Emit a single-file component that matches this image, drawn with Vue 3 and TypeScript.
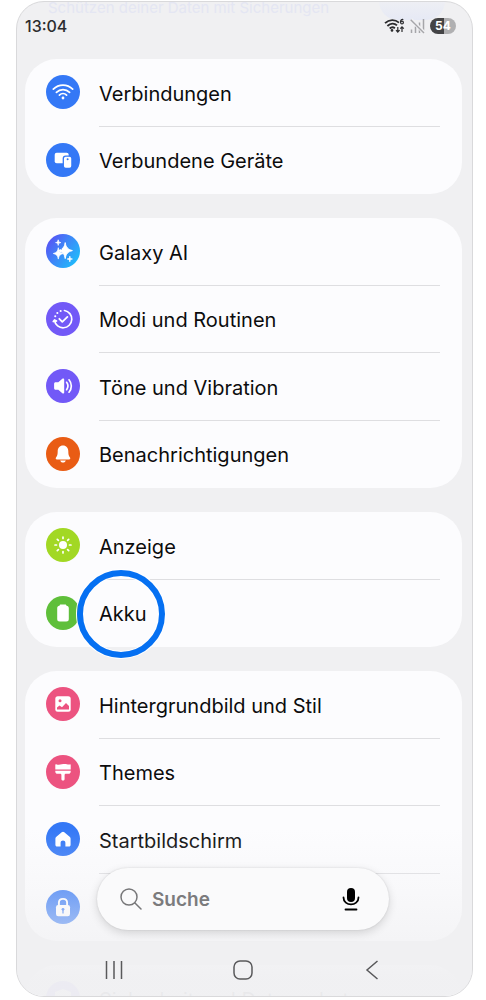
<script setup lang="ts">
import { ref } from 'vue'

interface Item {
  id: string
  label: string
  color: string
  marked?: boolean
}

const search = ref('')

const groups: Item[][] = [
  [
    { id: 'wifi', label: 'Verbindungen', color: 'blue' },
    { id: 'devices', label: 'Verbundene Geräte', color: 'blue' },
  ],
  [
    { id: 'ai', label: 'Galaxy AI', color: 'galaxy' },
    { id: 'modes', label: 'Modi und Routinen', color: 'violet' },
    { id: 'sound', label: 'Töne und Vibration', color: 'violet' },
    { id: 'bell', label: 'Benachrichtigungen', color: 'orange' },
  ],
  [
    { id: 'sun', label: 'Anzeige', color: 'lime' },
    { id: 'battery', label: 'Akku', color: 'green', marked: true },
  ],
  [
    { id: 'image', label: 'Hintergrundbild und Stil', color: 'pink' },
    { id: 'brush', label: 'Themes', color: 'pink' },
    { id: 'home', label: 'Startbildschirm', color: 'blue' },
    { id: 'lock', label: '', color: 'blue' },
  ],
  [{ id: 'shield', label: 'Sicherheit und Datenschutz', color: 'violet' }],
]
</script>

<template>
  <div class="phone">
    <header class="status">
      <span class="ghost-text">Schützen deiner Daten mit Sicherungen</span>
      <span class="ghost-dot"></span>
      <time class="clock">13:04</time>
      <div class="indicators">
        <svg width="21" height="16" viewBox="0 0 21 16" fill="none" stroke="#2c2c2e" aria-label="WLAN">
          <path d="M1 5.2C5.2 1.2 11 1.2 15 4.6M3.4 8C6.6 5 10.4 5 13 7.4M5.7 10.5c1.7-1.5 3.7-1.5 5.2-.2" stroke-width="1.8" />
          <circle cx="8" cy="12.4" r="1.3" fill="#2c2c2e" stroke="none" />
          <path d="M19.3 1.6c-1.8-.6-2.9.7-2.8 2.6" stroke-width="1.2" />
          <circle cx="18" cy="4.6" r="1.4" stroke-width="1.2" />
          <path d="M13.8 9v5M12 12.2l1.8 1.9 1.8-1.9M18 14V9M16.3 10.7 18 8.8l1.8 1.9" stroke-width="1.2" />
        </svg>
        <svg width="15" height="16" viewBox="0 0 15 16" fill="none" stroke="#a6a6a9" aria-label="Kein Signal">
          <path d="M1.5 11.5V15M5.5 8.5V15M9.5 4.5V15M13.5 1v14" stroke-width="1.5" />
          <path d="M1 1.5 14.5 15" stroke="#f1f1f3" stroke-width="3.6" />
          <path d="M.7 1.8 14 15" stroke-width="1.4" />
        </svg>
        <span class="charge">54</span>
      </div>
    </header>

    <main class="list">
      <ul v-for="(group, g) in groups" :key="g" class="card">
        <li v-for="item in group" :key="item.id" class="row">
          <a href="#" class="link">
            <svg class="icon" :class="item.color" width="34" height="34" viewBox="0 0 34 34" aria-hidden="true">
              <g v-if="item.id === 'wifi'" fill="none" stroke="#fff" stroke-width="1.7" stroke-linecap="round">
                <path d="M7.3 14.2c5.4-5.5 14-5.5 19.4 0M10.4 17.3c3.7-3.7 9.5-3.7 13.2 0M13.4 20.1c2.1-2 5.1-2 7.2 0" />
                <circle cx="17" cy="23" r="1.4" fill="#fff" stroke="none" />
              </g>
              <g v-else-if="item.id === 'devices'">
                <rect x="8.7" y="9.7" width="14" height="10.5" rx="2" fill="#fff" />
                <rect x="17.3" y="13.2" width="8.6" height="12.2" rx="2.4" fill="#fff" stroke="#3478f6" stroke-width="1.3" />
                <circle cx="21.6" cy="16.3" r="1" fill="#3478f6" />
              </g>
              <g v-else-if="item.id === 'ai'" fill="#fff">
                <path d="M19.2 8.6c.7 4.5 2.5 6.8 7.2 8-4.7 1.2-6.5 3.5-7.2 8-.7-4.5-2.5-6.8-7.2-8 4.7-1.2 6.5-3.5 7.2-8Z" stroke="#fff" />
                <path d="M12.3 13.7c.5 3.7 1.8 5 5 5.8-3.2.8-4.5 2.1-5 5.6-.5-3.5-1.8-4.8-5-5.6 3.200-.8 4.500-2.100 5-5.800Z" stroke="#fff" stroke-width=".7" />
                <path d="M12.2 5.8c.2 1.900.8 2.500 2.600 2.800-1.800.3-2.400.9-2.600 2.800-.2-1.900-.8-2.500-2.600-2.800 1.800-.3 2.400-.9 2.600-2.800ZM23.800 22.200c.2 1.900.8 2.500 2.600 2.800-1.800.3-2.400.9-2.600 2.800-.2-1.900-.8-2.500-2.600-2.800 1.800-.3 2.400-.9 2.600-2.800Z" stroke="#fff" stroke-width=".8" />
                <path d="M13.7 13.2c1.200.1 1.900 1.300 1.600 2.400" fill="none" stroke="#4688f8" stroke-width="1" />
              </g>
              <g v-else-if="item.id === 'modes'" fill="none" stroke="#fff" stroke-width="1.7" stroke-linecap="round" stroke-linejoin="round">
                <path d="M18.5 8.500A8.700 8.700 0 1 1 8.500 18.500M7.300 19.600l1.200-1.700 2 1.200" />
                <path d="m13.300 16.800 3 3 5.100-4.900" stroke-width="1.8" />
                <path d="M9.200 14.200h.1M11.300 11h.1M14.600 8.900h.1" stroke-width="2" />
              </g>
              <g v-else-if="item.id === 'sound'" fill="#fff">
                <path d="M9.600 13.300h2.700l4-3.500c.9-.7 1.900-.3 1.900.8v12.800c0 1.100-1 1.500-1.900.8l-4-3.500H9.600c-.9 0-1.500-.6-1.500-1.500v-4.400c0-.9.6-1.500 1.500-1.500Z" />
                <path d="M20.600 13.300c1.600 2.200 1.600 5.200 0 7.400M23 10.800c3.100 3.600 3.100 8.800 0 12.400" fill="none" stroke="#fff" stroke-width="1.7" stroke-linecap="round" />
              </g>
              <g v-else-if="item.id === 'bell'" fill="#fff">
                <path d="M17 8.500c3.300 0 5.300 2.500 5.300 5.500 0 3.400.4 4.900 1.700 6.600.7 1 .2 1.900-.9 1.900H10.900c-1.100 0-1.600-.9-.9-1.900 1.300-1.700 1.700-3.200 1.700-6.600 0-3 2-5.500 5.300-5.500ZM14.200 23.500h5.600c-.3 1.300-1.400 2.100-2.800 2.100s-2.500-.8-2.800-2.100Z" />
              </g>
              <g v-else-if="item.id === 'sun'">
                <circle cx="17" cy="17" r="4" fill="#fff" />
                <path d="M17 9v1.500M17 23.500V25M9 17h1.500M23.500 17H25M11.300 11.300l1.100 1.100M21.600 21.600l1.100 1.100M11.300 22.700l1.100-1.100M21.600 12.400l1.100-1.100" stroke="#fff" stroke-width="1.700" stroke-linecap="round" />
              </g>
              <path v-else-if="item.id === 'battery'" fill="#fff" d="M14.800 8.500h4.400c.7 0 1.200.5 1.300 1.200 1.500.2 2.300 1 2.300 2.500v10.700c0 1.700-.8 2.500-2.500 2.500h-6.600c-1.700 0-2.500-.8-2.500-2.500V12.200c0-1.500.8-2.300 2.300-2.500.1-.7.600-1.200 1.300-1.200Z" />
              <g v-else-if="item.id === 'image'">
                <rect x="9.3" y="9.3" width="15.4" height="15.4" rx="2.5" fill="#fff" />
                <circle cx="14" cy="13.8" r="1.5" fill="#ec5380" />
                <path d="M11 22.500v-2l2.500-2 2.500 1.700 4-4.200 3 3v3.500Z" fill="#ec5380" />
              </g>
              <g v-else-if="item.id === 'brush'" fill="#fff">
                <path d="M10.200 9.200c3.500 1.500 6.500-.8 10.600 0 1.200.3 2.100.5 3 .2.500-.2.900 0 .900.500v4.700H9.300V9.800c0-.6.400-.8.900-.6ZM9.300 15.700h15.400v.7c0 1.600-.9 2.400-2.400 2.400h-2.200c-1 0-1.500.5-1.500 1.300v4c0 2-3.200 2-3.200 0v-4c0-.8-.5-1.300-1.500-1.300h-2.200c-1.500 0-2.400-.8-2.400-2.400Z" />
              </g>
              <path v-else-if="item.id === 'home'" fill="#fff" d="m15.700 10.300-5.300 4.500c-.8.600-1 1.200-1 2.100v5.800c0 1.200.6 1.800 1.800 1.800h3.400v-3.700c0-3 4.800-3 4.800 0v3.700h3.400c1.200 0 1.800-.6 1.800-1.800v-5.800c0-.9-.2-1.500-1-2.100l-5.300-4.500c-.9-.8-1.700-.8-2.600 0Z" />
              <g v-else-if="item.id === 'lock'">
                <path d="M12.900 16v-3.400c0-5 8.200-5 8.200 0V16" fill="none" stroke="#fff" stroke-width="1.900" />
                <rect x="10" y="15" width="14" height="11.300" rx="2.200" fill="#fff" />
                <path d="M17 19.500v4" stroke="#3478f6" stroke-width="1.300" />
                <circle cx="17" cy="19.300" r="1.400" fill="#3478f6" />
              </g>
              <path v-else fill="#fff" d="m17 8 8 3v6c0 5-3 8-8 10-5-2-8-5-8-10v-6Z" />
            </svg>
            <span class="label">{{ item.label }}</span>
          </a>
          <span v-if="item.marked" class="marker"></span>
        </li>
      </ul>
    </main>

    <footer class="dock">
      <form class="search" role="search" @submit.prevent>
        <svg width="22" height="22" viewBox="0 0 22 22" fill="none" stroke="#777779" stroke-width="1.5" stroke-linecap="round" aria-hidden="true">
          <circle cx="9" cy="9" r="8" />
          <path d="m15 15 6 6" />
        </svg>
        <input v-model="search" class="field" type="text" placeholder="Suche" aria-label="Suche" />
        <button class="plain" type="button" aria-label="Spracheingabe">
          <svg width="18" height="24" viewBox="0 0 18 24" fill="none" stroke="#000" stroke-width="1.8" stroke-linecap="round">
            <rect x="5" y="1" width="8" height="14" rx="4" fill="#000" stroke="none" />
            <path d="M1.500 10.500c0 9.200 15 9.200 15 0M3.500 22.500h11" />
          </svg>
        </button>
      </form>
      <nav class="nav" aria-label="Navigation">
        <button class="plain" type="button" aria-label="Letzte Apps">
          <svg width="20" height="20" viewBox="0 0 20 20" stroke="#59595b" stroke-width="1.5">
            <path d="M2.500 1v18M10 1v18M17.500 1v18" />
          </svg>
        </button>
        <button class="plain" type="button" aria-label="Startseite">
          <svg width="20" height="20" viewBox="0 0 20 20" fill="none" stroke="#59595b" stroke-width="1.5">
            <rect x="1" y="1" width="18" height="18" rx="6" />
          </svg>
        </button>
        <button class="plain" type="button" aria-label="Zurück">
          <svg width="20" height="20" viewBox="0 0 20 20" fill="none" stroke="#59595b" stroke-width="1.5">
            <path d="M15.500 1 5 10l10.500 9" />
          </svg>
        </button>
      </nav>
    </footer>
  </div>
</template>

<style>
body {
  background: #fff;
}
</style>

<style scoped>
.phone {
  position: relative;
  box-sizing: border-box;
  height: calc(100vh - 4px);
  margin: 1px 13px 0 16px;
  overflow: hidden;
  border: 1px solid #d9d9db;
  border-radius: 28px;
  background: #f0f0f2;
  font-family: Inter, "Liberation Sans", sans-serif;
}

.status {
  position: relative;
  box-sizing: border-box;
  display: flex;
  justify-content: space-between;
  align-items: center;
  height: 57px;
  padding: 0 16px 9px 8px;
  overflow: hidden;
}

.ghost-text {
  position: absolute;
  top: -4px;
  left: 31px;
  color: #e4e6f3;
  font-size: 15px;
  line-height: 20px;
  white-space: nowrap;
}

.ghost-dot {
  position: absolute;
  top: -20px;
  right: 27px;
  width: 66px;
  height: 38px;
  border-radius: 19px;
  background: linear-gradient(#eeeff4 50%, #e6e9f5);
}

.clock {
  position: relative;
  color: #2c2c2e;
  font-size: 16px;
  font-weight: 500;
  line-height: 20px;
}

.indicators {
  position: relative;
  display: flex;
  align-items: center;
  gap: 5px;
}

.charge {
  width: 26px;
  border-radius: 8px;
  background: linear-gradient(90deg, #444446 54%, #b0b0b2 54%);
  color: #fff;
  font-size: 12px;
  font-weight: 700;
  line-height: 16px;
  text-align: center;
}

.list {
  display: flex;
  flex-direction: column;
  gap: 24px;
  padding: 0 10px 0 8px;
}

.card {
  margin: 0;
  padding: 0;
  border-radius: 32px;
  background: #fcfcfe;
  list-style: none;
}

.row {
  position: relative;
  height: 67px;
  padding: 0 22px 0 21px;
}

.row:nth-child(odd) {
  height: 68px;
}

.link {
  display: flex;
  align-items: center;
  gap: 19px;
  height: 100%;
  color: #0c0c0d;
  text-decoration: none;
}

.icon {
  flex: none;
  margin-bottom: 2px;
  border-radius: 50%;
}

.blue { background: #3478f6; }
.galaxy { background: linear-gradient(125deg, #5a50f4 8%, #3a8cf8 50%, #1cc0fb 92%); }
.violet { background: #7259f7; }
.orange { background: #e95c14; }
.lime { background: #a2d824; }
.green { background: #5fbf3a; }
.pink { background: #ec5380; }

.label {
  display: flex;
  flex: 1;
  align-items: center;
  box-sizing: border-box;
  height: 100%;
  padding-top: 2px;
  border-bottom: 1px solid #dedee1;
  font-size: 20px;
  line-height: 24px;
  white-space: nowrap;
}

.row:last-child .label {
  border-bottom-color: transparent;
}

.marker {
  position: absolute;
  top: -10px;
  left: 52px;
  box-sizing: border-box;
  width: 88px;
  height: 88px;
  border: 6px solid #0570f2;
  border-radius: 50%;
  box-shadow: 0 0 0 1px #fff, inset 0 0 0 1px #fff;
  pointer-events: none;
}

.dock {
  position: absolute;
  right: 0;
  bottom: 0;
  left: 0;
  padding-top: 40px;
  background: linear-gradient(
    rgba(240, 240, 242, 0) 0,
    rgba(240, 240, 242, 0.3) 60px,
    rgba(240, 240, 242, 0.65) 110px,
    rgba(240, 240, 242, 0.97) 150px
  );
}

.search {
  display: flex;
  align-items: center;
  gap: 10px;
  box-sizing: border-box;
  height: 62px;
  margin: 0 83px 0 80px;
  padding: 0 29px 0 23px;
  border-radius: 31px;
  background: #fafafb;
  box-shadow: 0 3px 10px rgba(0, 0, 0, 0.14), 0 0 2px rgba(0, 0, 0, 0.12);
}

.field {
  flex: 1;
  min-width: 0;
  padding: 2px 0 0;
  border: 0;
  outline: 0;
  background: transparent;
  color: #0c0c0d;
  font-family: inherit;
  font-size: 19px;
  font-weight: 600;
  line-height: 24px;
}

.field::placeholder {
  color: #7b7b7d;
  opacity: 1;
}

.plain {
  display: flex;
  justify-content: center;
  align-items: center;
  padding: 0;
  border: 0;
  background: transparent;
}

.nav {
  display: grid;
  grid-template-columns: repeat(3, 1fr);
  height: 52px;
  padding: 14px 36px 0 32px;
}
</style>
